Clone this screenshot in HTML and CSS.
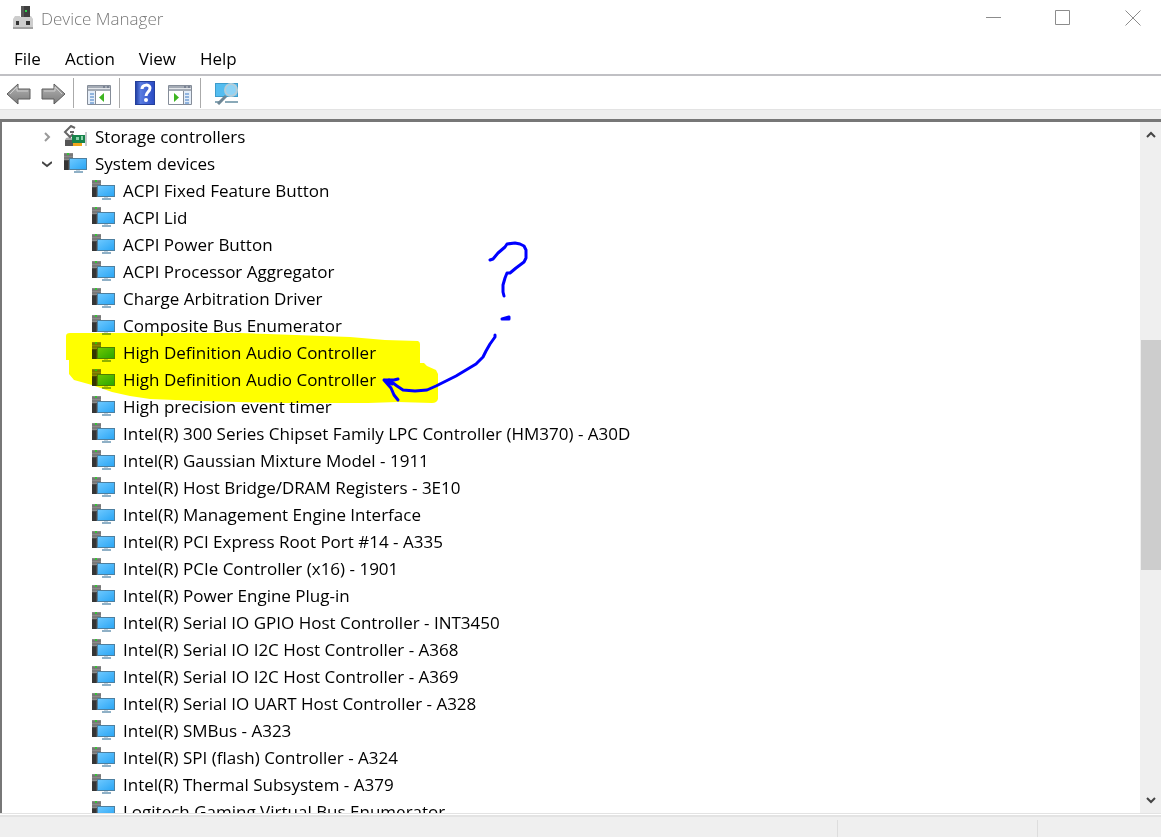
FILE: index.html
```html
<!DOCTYPE html>
<html lang="en">
<head>
    <meta charset="utf-8">
    <title>Device Manager</title>
    <link rel="stylesheet" href="styles.css">
</head>
<body>
    <!-- shared icons -->
    <svg class="symbols" aria-hidden="true">
        <defs>
            <linearGradient id="screen" x1="0" y1="0" x2="1" y2="1">
                <stop offset="0" stop-color="#6cc8ff"/>
                <stop offset="1" stop-color="#2ba6f5"/>
            </linearGradient>
            <linearGradient id="metal" x1="0" y1="0" x2="0" y2="1">
                <stop offset="0" stop-color="#b5b5b5"/>
                <stop offset="1" stop-color="#7c7c7c"/>
            </linearGradient>
            <linearGradient id="book" x1="0" y1="0" x2="1" y2="0">
                <stop offset="0" stop-color="#2443a8"/>
                <stop offset="0.25" stop-color="#5a7ce0"/>
                <stop offset="1" stop-color="#2a4bc4"/>
            </linearGradient>
        </defs>
        <symbol id="device" viewBox="0 0 24 22">
            <path d="M1 1h9v17H1z" fill="#4a4a4a"/>
            <path d="M1 1h9v7H1z" fill="#8a8a8a"/>
            <path d="M1 3h9M1 6h9" stroke="#666" stroke-width="1"/>
            <path d="M4 1h2v2H4z" fill="#35c335"/>
            <path d="M1 9h4v9H1z" fill="#353535"/>
            <path d="M6 6h18v12H6z" fill="#4d7f9f"/>
            <path d="M7 7h16v10H7z" fill="url(#screen)"/>
            <path d="M13 18h4v2h-4z" fill="#c5d4df"/>
            <path d="M11 19h9v2h-9z" fill="#8fb0c6"/>
        </symbol>
    </svg>

    <div class="window">
        <header class="title-bar">
            <svg class="app-icon" viewBox="0 0 22 26" aria-hidden="true">
                <path d="M9 1h9v12H9z" fill="#3e3e3e"/>
                <path d="M9 1h3v12H9z" fill="#575757"/>
                <path d="M13 5h2v2h-2z" fill="#2ed24b"/>
                <path d="M1 14l2-3h5v1h10v-1h1l2 3v8H1z" fill="#cdcdcd"/>
                <path d="M1 22h20v2H1z" fill="#a2a2a2"/>
                <path d="M4 16h3v4H4zM14 16h4v4h-4z" fill="#333"/>
            </svg>
            <h1>Device Manager</h1>
            <div class="window-controls">
                <button aria-label="Minimize"><svg viewBox="0 0 16 16"><path d="M1 7.5h15"/></svg></button>
                <button aria-label="Maximize"><svg viewBox="0 0 16 16"><path d="M.5.5h14v14H.5z"/></svg></button>
                <button aria-label="Close"><svg viewBox="0 0 16 16"><path d="M.5.5l15 15M15.5.5l-15 15"/></svg></button>
            </div>
        </header>

        <nav class="menu-bar">
            <button>File</button>
            <button>Action</button>
            <button>View</button>
            <button>Help</button>
        </nav>

        <div class="toolbar">
            <div class="tool-group">
                <button aria-label="Back">
                    <svg viewBox="0 0 26 24"><path d="M2 13L13 3v5h12v10H13v5z" fill="url(#metal)" stroke="#5c5c5c"/><path d="M5 13l7-7v4h11" fill="none" stroke="#cfcfcf"/></svg>
                </button>
                <button aria-label="Forward">
                    <svg viewBox="0 0 26 24"><path d="M25 13L14 3v5H2v10h12v5z" fill="url(#metal)" stroke="#5c5c5c"/><path d="M22 13l-7-7v4H4" fill="none" stroke="#cfcfcf"/></svg>
                </button>
            </div>
            <div class="tool-group">
                <button aria-label="Show or hide console tree">
                    <svg viewBox="0 0 26 24"><path d="M1.5 4.500h23v19h-23z" fill="#fff" stroke="#858d99"/><path d="M2 5h22v5H2z" fill="#a4abb5"/><path d="M2 7.500h22" stroke="#e3e6ea"/><path d="M17 6h2M21 6h2" stroke="#4e5a72"/><path d="M2 10h7v13H2z" fill="#e4edf8"/><path d="M4 13h4M4 16h4M4 19h4M4 22h4" stroke="#3c7ac4"/><path d="M9.500 10v13" stroke="#858d99"/><path d="M18 12v9l-5-4.500z" fill="#3eb521"/></svg>
                </button>
            </div>
            <div class="tool-group">
                <button aria-label="Help">
                    <svg viewBox="0 0 26 24"><path d="M3 0h20v24H3z" fill="#243f9b"/><path d="M4 1h18v22H4z" fill="url(#book)"/><path d="M10 8c0-5 8-5 8-1 0 4-4 4-4 8" fill="none" stroke="#fff" stroke-width="3"/><circle cx="14" cy="19" r="2" fill="#fff"/></svg>
                </button>
                <button aria-label="Show or hide action pane">
                    <svg viewBox="0 0 26 24"><path d="M1.500 4.500h23v19h-23z" fill="#fff" stroke="#858d99"/><path d="M2 5h22v5H2z" fill="#a4abb5"/><path d="M2 7.500h22" stroke="#e3e6ea"/><path d="M17 6h2M21 6h2" stroke="#4e5a72"/><path d="M17 10h7v13h-7z" fill="#e4edf8"/><path d="M18 13h4M18 16h4M18 19h4M18 22h4" stroke="#3c7ac4"/><path d="M16.500 10v13" stroke="#858d99"/><path d="M7 12v9l5-4.500z" fill="#3eb521"/></svg>
                </button>
            </div>
            <div class="tool-group">
                <button aria-label="Scan for hardware changes">
                    <svg viewBox="0 0 26 24"><path d="M2 2h23v14H2z" fill="#3e9ccb"/><path d="M3 3h21v12H3z" fill="#54bdf0"/><path d="M2 21h6M12 21h13" stroke="#8aa9b8" stroke-width="2"/><path d="M5 23l8-8" stroke="#6e8796" stroke-width="3"/><circle cx="18" cy="9" r="6" fill="#8fd3f5" stroke="#b3cdd9" stroke-width="2"/></svg>
                </button>
            </div>
        </div>

        <main class="content">
            <div class="tree">
                <ul class="categories">
                    <li>
                        <div class="row">
                            <svg class="chevron closed" viewBox="0 0 10 10"><path d="M3 1l4 4-4 4"/></svg>
                            <svg class="icon" viewBox="0 0 24 22">
                                <path d="M2 15h10v6H2z" fill="#555"/>
                                <path d="M3 13l4-1 4 3H2z" fill="#aaa"/>
                                <path d="M12 3L8 1 2 7l5 5 3-3M7 7h4" fill="none" stroke="#666" stroke-width="2"/>
                                <path d="M9 10h13v8H9z" fill="#16834a"/>
                                <path d="M13 12h3v3h-3zM18 11h2v4h-2z" fill="#8bd2ab"/>
                                <path d="M23 7v14" stroke="#8d9499" stroke-width="1"/>
                                <path d="M10 18h9v3h-9z" fill="#f0a51c"/>
                            </svg>
                            <span>Storage controllers</span>
                        </div>
                    </li>
                    <li>
                        <div class="row">
                            <svg class="chevron" viewBox="0 0 10 10"><path d="M0 3l5 4 5-4"/></svg>
                            <svg class="icon"><use href="#device"/></svg>
                            <span>System devices</span>
                        </div>
                        <ul class="devices">
                            <li class="row"><svg class="icon"><use href="#device"/></svg><span>ACPI Fixed Feature Button</span></li>
                            <li class="row"><svg class="icon"><use href="#device"/></svg><span>ACPI Lid</span></li>
                            <li class="row"><svg class="icon"><use href="#device"/></svg><span>ACPI Power Button</span></li>
                            <li class="row"><svg class="icon"><use href="#device"/></svg><span>ACPI Processor Aggregator</span></li>
                            <li class="row"><svg class="icon"><use href="#device"/></svg><span>Charge Arbitration Driver</span></li>
                            <li class="row"><svg class="icon"><use href="#device"/></svg><span>Composite Bus Enumerator</span></li>
                            <li class="row"><svg class="icon"><use href="#device"/></svg><span>High Definition Audio Controller</span></li>
                            <li class="row"><svg class="icon"><use href="#device"/></svg><span>High Definition Audio Controller</span></li>
                            <li class="row"><svg class="icon"><use href="#device"/></svg><span>High precision event timer</span></li>
                            <li class="row"><svg class="icon"><use href="#device"/></svg><span>Intel(R) 300 Series Chipset Family LPC Controller (HM370) - A30D</span></li>
                            <li class="row"><svg class="icon"><use href="#device"/></svg><span>Intel(R) Gaussian Mixture Model - 1911</span></li>
                            <li class="row"><svg class="icon"><use href="#device"/></svg><span>Intel(R) Host Bridge/DRAM Registers - 3E10</span></li>
                            <li class="row"><svg class="icon"><use href="#device"/></svg><span>Intel(R) Management Engine Interface</span></li>
                            <li class="row"><svg class="icon"><use href="#device"/></svg><span>Intel(R) PCI Express Root Port #14 - A335</span></li>
                            <li class="row"><svg class="icon"><use href="#device"/></svg><span>Intel(R) PCIe Controller (x16) - 1901</span></li>
                            <li class="row"><svg class="icon"><use href="#device"/></svg><span>Intel(R) Power Engine Plug-in</span></li>
                            <li class="row"><svg class="icon"><use href="#device"/></svg><span>Intel(R) Serial IO GPIO Host Controller - INT3450</span></li>
                            <li class="row"><svg class="icon"><use href="#device"/></svg><span>Intel(R) Serial IO I2C Host Controller - A368</span></li>
                            <li class="row"><svg class="icon"><use href="#device"/></svg><span>Intel(R) Serial IO I2C Host Controller - A369</span></li>
                            <li class="row"><svg class="icon"><use href="#device"/></svg><span>Intel(R) Serial IO UART Host Controller - A328</span></li>
                            <li class="row"><svg class="icon"><use href="#device"/></svg><span>Intel(R) SMBus - A323</span></li>
                            <li class="row"><svg class="icon"><use href="#device"/></svg><span>Intel(R) SPI (flash) Controller - A324</span></li>
                            <li class="row"><svg class="icon"><use href="#device"/></svg><span>Intel(R) Thermal Subsystem - A379</span></li>
                            <li class="row"><svg class="icon"><use href="#device"/></svg><span>Logitech Gaming Virtual Bus Enumerator</span></li>
                        </ul>
                    </li>
                </ul>

                <!-- marker and pen notes over the list -->
                <svg class="notes marker" viewBox="60 230 500 180" aria-hidden="true">
                    <path d="M66 336q0-3 4-3H240L350 337l35 3 33 1q2 1 2 3v19h4l3 3 9 4 2 4v25q-1 4-6 4l-34-1-30 1H280L200 401l-50-2-20-3-18-4-20-7-18-5-5-6V360h-3z" fill="#ff0"/>
                </svg>
                <svg class="notes" viewBox="60 230 500 180" aria-hidden="true">
                    <g fill="none" stroke="#00f" stroke-width="3" stroke-linecap="round" stroke-linejoin="round">
                        <path d="M490 260l3-1 5-6 7-6 2-3 8-1 5 1 4 2 2 4v8l-2 4-8 6-6 5h-3l-2 5-2 7v7l1 4"/>
                        <path d="M502 319l7-2v2z"/>
                        <path d="M495 335v2l-5 7-4 7-3 6-7 7-10 6-10 6-10 5-10 5-9 4-12 1-12-1-6-4-8-6"/>
                        <path d="M398 379l-4 1-10 0 7 8 3 7 4 5M384 380l8 4"/>
                    </g>
                </svg>
            </div>
            <div class="scrollbar">
                <button aria-label="Scroll up"><svg class="chevron" viewBox="0 0 10 10"><path d="M1 7l4-4 4 4"/></svg></button>
                <div class="track"><div class="thumb"></div></div>
                <button aria-label="Scroll down"><svg class="chevron" viewBox="0 0 10 10"><path d="M1 3l4 4 4-4"/></svg></button>
            </div>
        </main>

        <footer class="status-bar">
            <div></div>
            <div></div>
            <div></div>
        </footer>
    </div>
</body>
</html>
```
FILE: styles.css
```css
* {
    box-sizing: border-box;
}
body {
    margin: 0;
    font-family: "Open Sans", "Noto Sans", sans-serif;
    font-size: 17px;
    color: #000;
    background: #fff;
}
button {
    padding: 0;
    border: none;
    background: none;
    font: inherit;
    color: inherit;
}
svg {
    display: block;
    flex: none;
}
ul {
    list-style: none;
    margin: 0;
    padding: 0;
}
.symbols {
    position: absolute;
    width: 0;
    height: 0;
}
.window {
    display: flex;
    flex-direction: column;
    height: 100vh;
}

/* title bar */
.title-bar {
    display: flex;
    align-items: center;
    height: 36px;
    padding-left: 12px;
}
.app-icon {
    width: 22px;
    height: 26px;
}
h1 {
    margin: 0 0 0 7px;
    font-size: 17px;
    font-weight: 300;
    color: #777;
}
.window-controls {
    display: flex;
    margin-left: auto;
}
.window-controls button {
    display: flex;
    align-items: center;
    justify-content: center;
    width: 70px;
    height: 36px;
}
.window-controls button:last-child {
    width: 63px;
    padding-left: 7px;
}
.window-controls svg {
    width: 16px;
    height: 16px;
    fill: none;
    stroke: #8c8c8c;
}

/* menu and toolbar */
.menu-bar {
    display: flex;
    gap: 24px;
    height: 38px;
    padding: 8px 14px 0;
    line-height: 30px;
}
.menu-bar button {
    height: 30px;
}
.toolbar {
    display: flex;
    align-items: center;
    height: 36px;
    border-top: 2px solid #c0c0c4;
    border-bottom: 1px solid #e3e3e3;
    padding-left: 5px;
}
.tool-group {
    display: flex;
    align-items: center;
    gap: 9px;
    height: 30px;
    padding-right: 7px;
}
.tool-group + .tool-group {
    border-left: 1px solid #aaa;
    padding-left: 12px;
}
.toolbar svg {
    width: 26px;
    height: 24px;
}

/* device list */
.content {
    display: flex;
    flex: 1;
    min-height: 0;
    margin-top: 9px;
    border-top: 3px solid #777;
    border-left: 2px solid #777;
    box-shadow: 0 -9px #efefef;
}
.tree {
    position: relative;
    flex: 1;
    overflow: hidden;
    padding: 1px 0 0 38px;
}
.row {
    display: flex;
    align-items: center;
    height: 27px;
    white-space: nowrap;
}
.devices {
    padding-left: 51px;
}
.icon {
    width: 24px;
    height: 22px;
    margin: 0 8px 2px 0;
}
.chevron {
    width: 10px;
    height: 10px;
    fill: none;
    stroke: #444;
    stroke-width: 2;
}
.row .chevron {
    margin: 0 11px 0 2px;
}
.closed {
    stroke: #999;
}
.notes {
    position: absolute;
    top: 108px;
    left: 58px;
    width: 500px;
    height: 180px;
    pointer-events: none;
}
.marker {
    mix-blend-mode: multiply;
}

/* scrollbar */
.scrollbar {
    display: flex;
    flex-direction: column;
    width: 21px;
    background: #efefef;
}
.scrollbar button {
    display: flex;
    align-items: center;
    justify-content: center;
    height: 26px;
}
.track {
    flex: 1;
    padding-left: 1px;
}
.thumb {
    height: 36%;
    background: #cdcdcd;
}
.track::before {
    content: "";
    display: block;
    height: 30%;
}

/* status bar */
.status-bar {
    display: flex;
    height: 24px;
    padding-top: 6px;
    border-top: 1px solid #e3e3e3;
    background: linear-gradient(#fff 1px, #e3e3e3 1px, #e3e3e3 3px, #efefef 3px);
}
.status-bar div {
    width: 200px;
    border-left: 1px solid #ddd;
}
.status-bar div:first-child {
    flex: 1;
    border: none;
}
.status-bar div:last-child {
    width: 124px;
}
```
